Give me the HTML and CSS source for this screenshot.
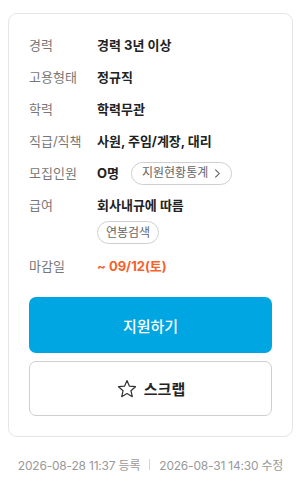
FILE: index.html
```html
<!DOCTYPE html>
<html lang="ko">
<head>
<meta charset="utf-8">
<link rel="stylesheet" href="styles.css">
</head>
<body>
<div class="card">
  <dl class="info">
    <div class="row"><dt>경력</dt><dd>경력 3년 이상</dd></div>
    <div class="row"><dt>고용형태</dt><dd>정규직</dd></div>
    <div class="row"><dt>학력</dt><dd>학력무관</dd></div>
    <div class="row"><dt>직급/직책</dt><dd>사원, 주임/계장, 대리</dd></div>
    <div class="row"><dt>모집인원</dt><dd class="inline">O명 <span class="chip">지원현황통계 <svg class="chev" viewBox="0 0 8 12" width="7" height="11"><path d="M1.5 1.5 L6 6 L1.5 10.5" fill="none" stroke="#555" stroke-width="1.2"/></svg></span></dd></div>
    <div class="row"><dt>급여</dt><dd><div>회사내규에 따름</div><span class="chip chip-block">연봉검색</span></dd></div>
    <div class="row"><dt>마감일</dt><dd class="deadline">~ 09/12(토)</dd></div>
  </dl>
  <div class="actions">
    <button class="btn btn-primary">지원하기</button>
    <button class="btn btn-outline"><svg class="star" viewBox="0 0 24 24" width="22" height="22"><path d="M12 2.8 L14.7 8.9 L21.3 9.5 L16.3 13.9 L17.8 20.4 L12 17 L6.2 20.4 L7.7 13.9 L2.7 9.5 L9.3 8.9 Z" fill="none" stroke="#333" stroke-width="1.3" stroke-linejoin="round"/></svg>스크랩</button>
  </div>
</div>
<p class="meta"><span>2026-08-28 11:37 등록</span><span class="sep"></span><span>2026-08-31 14:30 수정</span></p>
</body>
</html>
```
FILE: styles.css
```css
* { box-sizing: border-box; }
body {
  margin: 0;
  padding: 13px 11px 0 8px;
  font-family: Inter, "Noto Sans CJK KR", sans-serif;
  background: #fff;
  color: #222;
}
.card {
  border: 1px solid #e6e6e6;
  border-radius: 9px;
  padding: 21px 20px 20px 20px;
}
.info {
  margin: 0;
  display: flex;
  flex-direction: column;
  gap: 12px;
}
.row {
  display: flex;
  align-items: flex-start;
  font-size: 13px;
  line-height: 20px;
}
dt {
  width: 68px;
  flex: none;
  color: #777;
}
dd {
  margin: 0;
  font-weight: 700;
  color: #222;
}
dd.inline {
  display: flex;
  align-items: center;
  gap: 12px;
  height: 20px;
}
.chip {
  display: inline-flex;
  align-items: center;
  gap: 6px;
  height: 23px;
  padding: 0 10px 0 10px;
  border: 1px solid #cfcfcf;
  border-radius: 12px;
  font-size: 12px;
  font-weight: 400;
  color: #666;
}
.chip-block {
  margin-top: 6px;
  padding: 0 8px;
}
.deadline {
  color: #f7612a;
}
.actions {
  margin-top: 21px;
  display: flex;
  flex-direction: column;
  gap: 8px;
}
.btn {
  display: flex;
  align-items: center;
  justify-content: center;
  gap: 6px;
  width: 100%;
  font-family: inherit;
  font-size: 15px;
  border-radius: 7px;
  cursor: pointer;
}
.btn-primary {
  height: 56px;
  background: #00a6e2;
  border: none;
  color: #fff;
  font-weight: 500;
}
.btn-outline {
  height: 55px;
  background: #fff;
  border: 1px solid #cfcfcf;
  color: #222;
  font-weight: 700;
}
.meta {
  margin: 19px 0 0 0;
  display: flex;
  justify-content: center;
  align-items: center;
  gap: 9px;
  font-size: 12px;
  color: #999;
  letter-spacing: -0.2px;
}
.sep {
  width: 1px;
  height: 11px;
  background: #d5d5d5;
}
```
